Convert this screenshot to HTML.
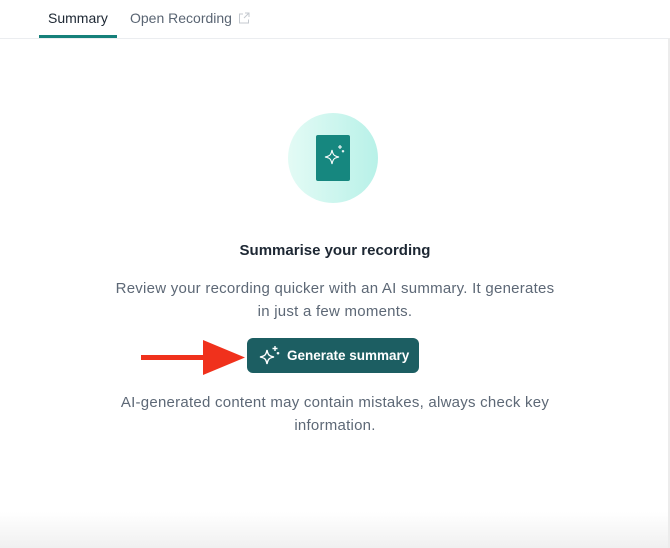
<!DOCTYPE html>
<html><head><style>
body{margin:0;width:670px;height:548px;background:#fff;font-family:"Liberation Sans",sans-serif;position:relative;overflow:hidden}
.tabs{position:absolute;top:0;left:0;right:0;height:38px;border-bottom:1px solid #ebedf0}
.t1{position:absolute;left:48px;top:10px;font-size:14px;color:#1d2733}
.u{position:absolute;left:39px;top:35px;width:78px;height:3px;background:#15807a}
.t2{position:absolute;left:130px;top:10px;font-size:14px;color:#5a6573}
.circ{position:absolute;left:288px;top:113px;width:90px;height:90px;border-radius:50%;background:linear-gradient(90deg,#e3fbf5,#b8f1e8)}
.card{position:absolute;left:316px;top:135px;width:34px;height:46px;border-radius:2px;background:#16877f}
h2{position:absolute;left:0;right:0;top:242px;margin:0;text-align:center;font-size:15px;font-weight:bold;color:#1d2733}
.p{position:absolute;left:80px;width:510px;text-align:center;font-size:15px;letter-spacing:0.25px;line-height:23px;color:#5d6876}
.btn{position:absolute;left:247px;top:338px;width:172px;height:35px;border-radius:6px;background:#1c5e62;color:#fff;font-size:13.5px;font-weight:bold}
.btn span{position:absolute;left:40px;top:10px}
.edge{position:absolute;right:0;top:38px;width:2px;bottom:0;background:#ececec}
.bot{position:absolute;left:0;right:0;bottom:0;height:36px;background:linear-gradient(#fff,#f0f0f0)}
</style></head><body>
<div class="tabs"><div class="t1">Summary</div><div class="u"></div>
<div class="t2">Open Recording <svg width="12" height="12" viewBox="0 0 12 12" style="vertical-align:-1px;margin-left:2px" fill="none" stroke="#c4c9cf" stroke-width="1"><path d="M5 2H1.5v9h9V7.5M7 1h4v4M11 1L6 6"/></svg></div></div>
<div class="circ"></div>
<div class="card"><svg width="34" height="46" viewBox="0 0 34 46" fill="none" stroke="#fff" stroke-width="1.1"><path d="M16 15c1 5 2 6 7 7c-5 1-6 2-7 7c-1-5-2-6-7-7c5-1 6-2 7-7z"/><path d="M24 10v4M22 12h4M27 15v2.5M25.8 16.2h2.4"/></svg></div>
<h2>Summarise your recording</h2>
<div class="p" style="top:277px">Review your recording quicker with an AI summary. It generates<br>in just a few moments.</div>
<svg style="position:absolute;left:140px;top:340px" width="106" height="36"><rect x="1" y="15" width="66" height="5" fill="#f0311c"/><path d="M63 0L105 17.5L63 35z" fill="#f0311c"/></svg>
<div class="btn"><svg style="position:absolute;left:10px;top:6px" width="24" height="24" viewBox="0 0 24 24" fill="none" stroke="#fff" stroke-width="1.4"><path d="M10 6c1 5 2 6 7 7c-5 1-6 2-7 7c-1-5-2-6-7-7c5-1 6-2 7-7z"/><path d="M18 2v5M15.5 4.5h5M21 8v2.5M19.7 9.2h2.6"/></svg><span>Generate summary</span></div>
<div class="p" style="top:391px">AI-generated content may contain mistakes, always check key<br>information.</div>
<div class="bot"></div><div class="edge"></div>
</body></html>
